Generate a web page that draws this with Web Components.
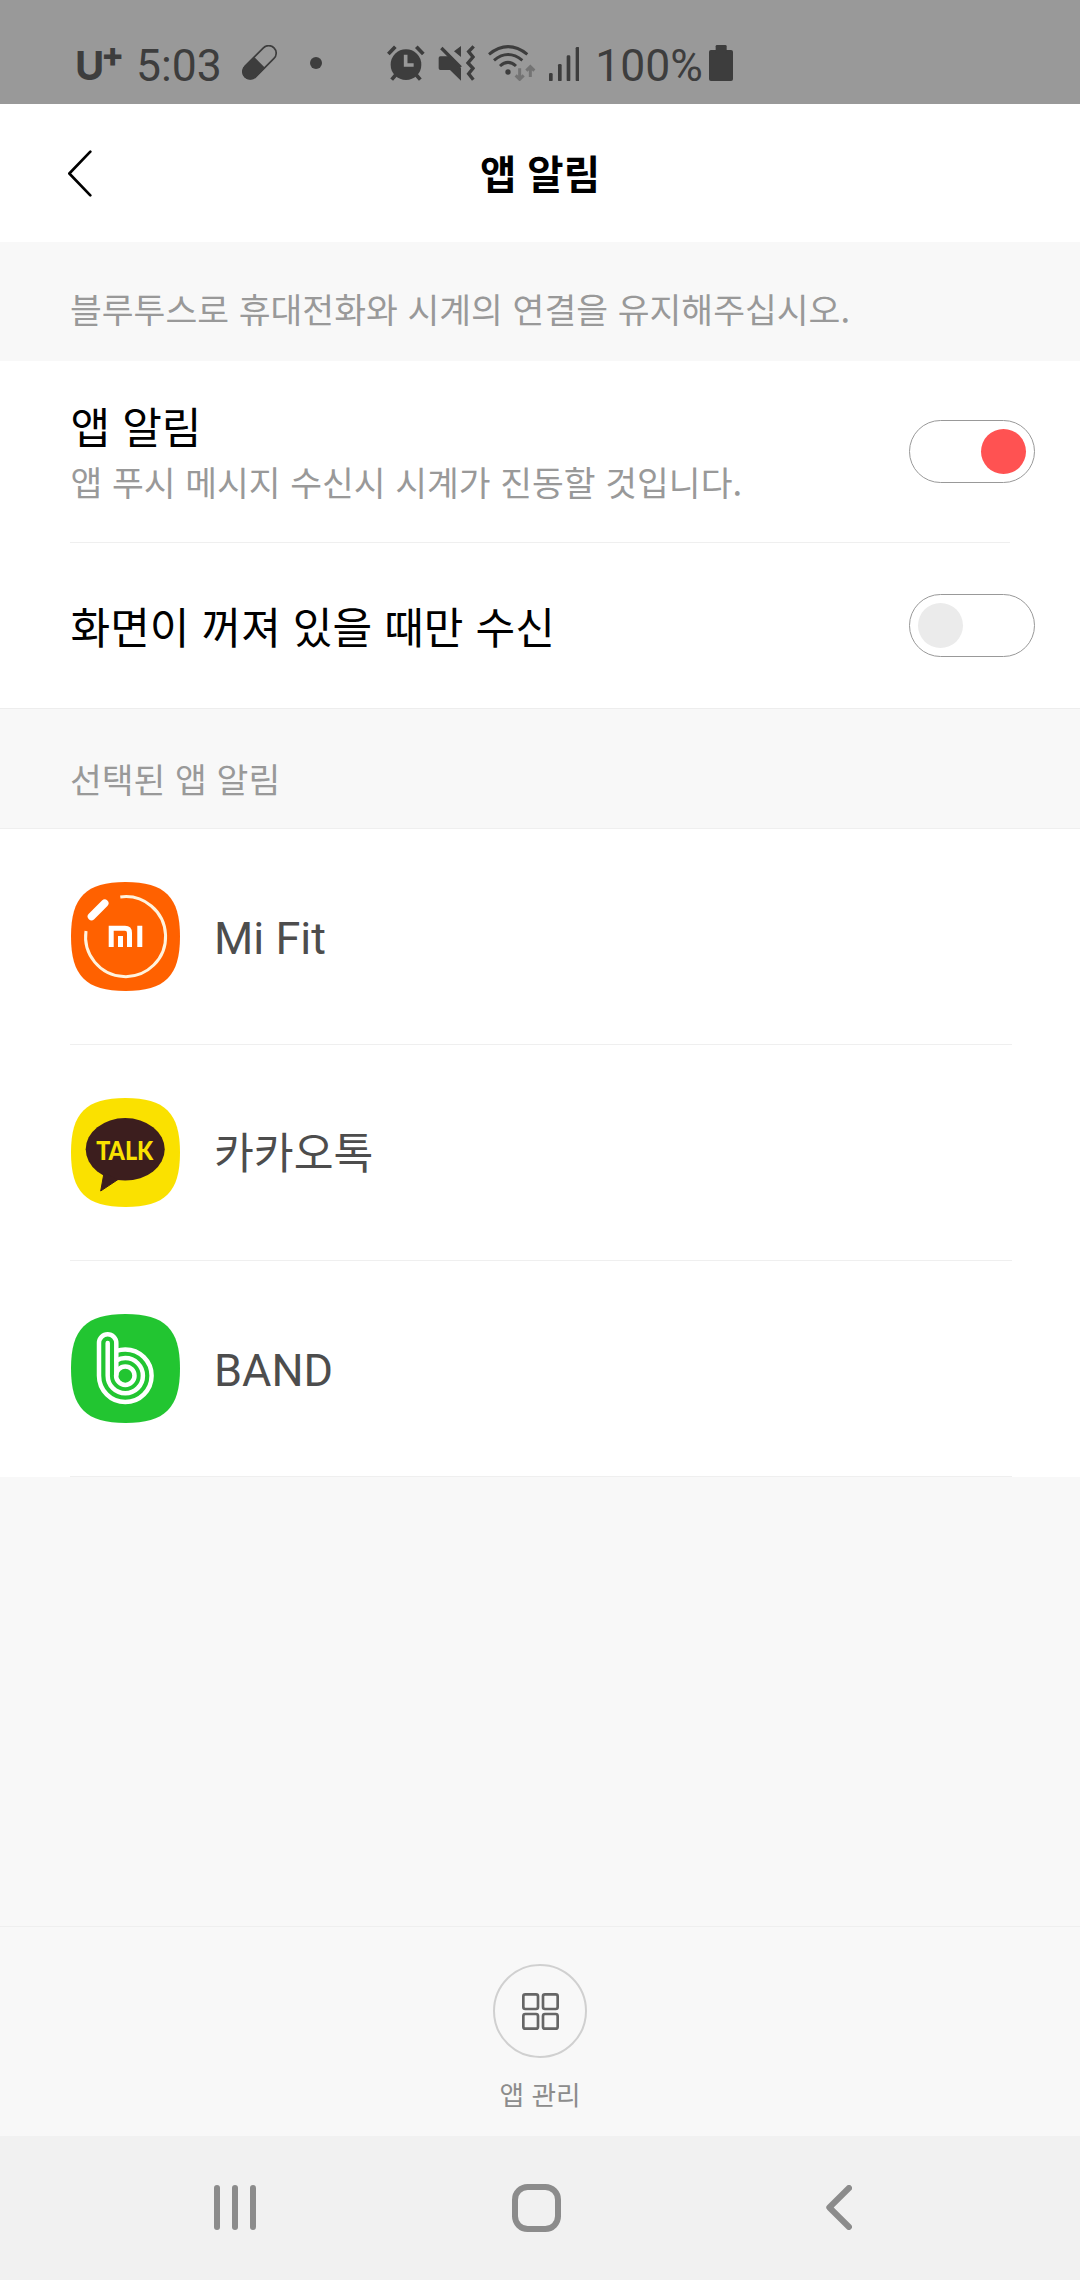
<!DOCTYPE html>
<html lang="ko">
<head>
<meta charset="utf-8">
<title>앱 알림</title>
<style>
  body {
    margin: 0;
    width: 1080px;
    height: 2280px;
    overflow: hidden;
    font-family: "Noto Sans CJK KR", sans-serif;
    background: #f8f8f8;
  }
</style>
</head>
<body>
<app-screen></app-screen>

<script>
// name: [width, height, markup], drawn in thirds of a pixel
const icons = {
  pill: [105, 105, `
    <g transform="translate(52.5 52) rotate(-45)">
      <rect x="-61.5" y="-22.5" width="123" height="45" rx="22.5" fill="none" stroke="currentColor" stroke-width="5"/>
      <path d="M0-24H-39a24 24 0 0 0 0 48H0z"/>
    </g>`],
  dot: [36, 36, `<circle cx="18" cy="18" r="18"/>`],
  alarm: [113, 108, `
    <circle cx="57" cy="59" r="46"/>
    <g fill="none" stroke="currentColor" stroke-width="11">
      <path d="M4 27L25 5M88 5l21 22M26 90L14 104M88 90l12 14"/>
      <path d="M56 29V60H80" stroke="#999"/>
    </g>`],
  mute: [110, 108, `
    <path d="M7 34H34L69 70V107L36 75H7Q2 75 2 70V39Q2 34 7 34zM48 19L69 3V36z"/>
    <path d="M10 9L68 67M107 4L92 20L105 36L90 54L105 70L92 86L106 104" fill="none" stroke="currentColor" stroke-width="10"/>`],
  wifi: [143, 108, `
    <circle cx="60" cy="81" r="8"/>
    <path d="M3 28Q60-18 118 28M18 46Q60 11 103 46M36 63Q60 41 84 63" fill="none" stroke="currentColor" stroke-width="9"/>
    <path d="M95 70V100M83 91l12 12l12-12M127 96V66M115 77l12-12l12 12" fill="none" stroke="#737373" stroke-width="9"/>`],
  signal: [92, 109, `
    <rect y="84" width="11" height="25" rx="4"/>
    <rect x="27" y="57" width="11" height="52" rx="4"/>
    <rect x="53" y="31" width="11" height="78" rx="4"/>
    <rect x="80" y="6" width="11" height="103" rx="4"/>`],
  battery: [72, 108, `
    <rect y="15" width="72" height="93" rx="6"/>
    <rect x="20" width="33" height="24" rx="4"/>`],
  back: [75, 141, `<path d="M70 5L7 70.500L70 136" fill="none" stroke="currentColor" stroke-width="8" stroke-linecap="round" stroke-linejoin="round"/>`],
  apps: [111, 111, `
    <g fill="none" stroke="currentColor" stroke-width="8">
      <rect x="4" y="4" width="44" height="44" rx="6"/>
      <rect x="63" y="4" width="44" height="44" rx="6"/>
      <rect x="4" y="63" width="44" height="44" rx="6"/>
      <rect x="63" y="63" width="44" height="44" rx="6"/>
    </g>`],
  recents: [126, 135, `
    <rect width="18" height="135" rx="9"/>
    <rect x="54" width="18" height="135" rx="9"/>
    <rect x="108" width="18" height="135" rx="9"/>`],
  home: [147, 144, `<rect x="9" y="9" width="129" height="126" rx="38" fill="none" stroke="currentColor" stroke-width="18"/>`],
  navback: [78, 135, `<path d="M69 9L10 67.500L69 126" fill="none" stroke="currentColor" stroke-width="18" stroke-linecap="round" stroke-linejoin="round"/>`]
};

const squircle = "M54.500 0C94 0 109 15 109 54.500S94 109 54.500 109 0 94 0 54.500 15 0 54.500 0";

const logos = {
  mifit: `
    <path d="${squircle}" fill="#ff6100"/>
    <path d="M49.300 15A40 40 0 1 1 15 49" fill="none" stroke="#fff3de" stroke-width="3"/>
    <path d="M20.500 34.500L33.700 21.200" stroke="#fff" stroke-width="7.600" stroke-linecap="round"/>
    <path d="M40.200 65V46.300H54Q58.500 46.300 58.500 51V65" fill="none" stroke="#fff" stroke-width="5"/>
    <path d="M49.500 54V65M68.800 43.800V65" stroke="#fff" stroke-width="5"/>`,
  talk: `
    <path d="${squircle}" fill="#fae100"/>
    <ellipse cx="54.200" cy="51.300" rx="39.500" ry="31.300" fill="#3c1e1e"/>
    <path d="M33 75L29.700 93L47 81.500z" fill="#3c1e1e" stroke="#3c1e1e" stroke-linejoin="round"/>
    <text x="25.200" y="61.700" textLength="57" lengthAdjust="spacingAndGlyphs" font-family="Lato" font-weight="900" font-size="26.500" fill="#fae100">TALK</text>`,
  band: `
    <path d="${squircle}" fill="#22c531"/>
    <g fill="none" stroke="#fff" stroke-width="4.500">
      <path d="M45.300 61.700V29a8.650 8.650 0 0 0-17.300 0V61.700a26.300 26.300 0 1 0 26.300-26.300a26.300 26.300 0 0 0-9 1.600"/>
      <path d="M36.700 29V61.700a17.600 17.600 0 1 0 17.600-17.600a17.600 17.600 0 0 0-9 2.500" stroke-linecap="round"/>
      <circle cx="54.300" cy="61.700" r="9.200"/>
    </g>`
};

class UiIcon extends HTMLElement {
  connectedCallback() {
    const [w, h, markup] = icons[this.getAttribute("name")];
    this.attachShadow({ mode: "open" }).innerHTML = `
      <style>
        :host { display: block; flex: none; }
        svg { display: block; }
      </style>
      <svg width="${w / 3}" height="${h / 3}" viewBox="0 0 ${w} ${h}" fill="currentColor">${markup}</svg>
    `;
  }
}
customElements.define("ui-icon", UiIcon);

class AppLogo extends HTMLElement {
  connectedCallback() {
    this.attachShadow({ mode: "open" }).innerHTML = `
      <style>
        :host { display: block; flex: none; width: 109px; height: 109px; }
        svg { display: block; }
      </style>
      <svg width="109" height="109" viewBox="0 0 109 109">${logos[this.getAttribute("name")]}</svg>
    `;
  }
}
customElements.define("app-logo", AppLogo);

// Elements that only need a static template
function define(name, html) {
  const template = document.createElement("template");
  template.innerHTML = html;

  customElements.define(name, class extends HTMLElement {
    constructor() {
      super();
      this.attachShadow({ mode: "open" });
      this.shadowRoot.appendChild(template.content.cloneNode(true));
    }
  });
}

define("status-bar", `
  <style>
    :host {
      display: flex;
      align-items: flex-start;
      box-sizing: border-box;
      height: 104px;
      padding: 45px 0 0 75px;
      background: #999;
      color: #3d3d3d;
      font: 44.500px/44px Roboto, sans-serif;
      white-space: nowrap;
    }
    .carrier { display: flex; width: 61px; }
    .carrier b { font: 700 40px/44px Inter, sans-serif; width: 27px; margin-top: -1px; }
    .carrier i { font: 800 34px/24px Inter, sans-serif; margin: -2px 0 0 -1px; }
    .time { width: 85px; margin-top: -1px; }
    .percent { width: 107px; margin: -1px 0 0 16px; }
    .pill { margin-left: 21px; }
    .dot { margin: 12px 0 0 33px; }
    .alarm { margin-left: 65px; }
    .mute { margin-left: 13.600px; }
    .wifi { margin-left: 13.300px; }
    .signal { margin-left: 12.700px; }
    .battery { margin-left: 7px; }
  </style>
  <span class="carrier"><b>U</b><i>+</i></span>
  <span class="time">5:03</span>
  <ui-icon class="pill" name="pill"></ui-icon>
  <ui-icon class="dot" name="dot"></ui-icon>
  <ui-icon class="alarm" name="alarm"></ui-icon>
  <ui-icon class="mute" name="mute"></ui-icon>
  <ui-icon class="wifi" name="wifi"></ui-icon>
  <ui-icon class="signal" name="signal"></ui-icon>
  <span class="percent">100%</span>
  <ui-icon class="battery" name="battery"></ui-icon>
`);

define("title-bar", `
  <style>
    :host {
      display: grid;
      grid-template-columns: 1fr auto 1fr;
      align-items: center;
      box-sizing: border-box;
      height: 138px;
      padding: 0 67px;
      background: #fff;
      color: #000;
    }
    h1 { margin: 0; font-size: 39.500px; font-weight: 700; line-height: 58px; padding-bottom: 2px; }
  </style>
  <ui-icon name="back"></ui-icon>
  <h1><slot></slot></h1>
`);

define("section-note", `
  <style>
    :host {
      display: block;
      box-sizing: border-box;
      height: 119px;
      padding: 40px 70px 0;
      color: #999;
      font-size: 34.600px;
      line-height: 52px;
      white-space: nowrap;
    }
  </style>
  <slot></slot>
`);

define("toggle-switch", `
  <style>
    :host {
      display: flex;
      align-items: center;
      flex: none;
      box-sizing: border-box;
      width: 126px;
      height: 63px;
      padding: 0 8px;
      border: 1px solid #999;
      border-radius: 32px;
      background: #fff;
    }
    span { width: 45px; height: 45px; border-radius: 50%; background: #ebebeb; }
    :host([on]) { justify-content: flex-end; }
    :host([on]) span { background: #ff5252; }
  </style>
  <span></span>
`);

define("setting-row", `
  <style>
    :host {
      display: flex;
      align-items: center;
      justify-content: space-between;
      box-sizing: border-box;
      padding: 0 45px 0 70.500px;
      white-space: nowrap;
    }
    .label { color: #000; font-size: 43.100px; line-height: 60px; margin-top: -2px; }
    ::slotted([slot=detail]) { display: block; color: #999; font-size: 34.550px; line-height: 50px; margin-top: 1px; }
  </style>
  <div>
    <div class="label"><slot></slot></div>
    <slot name="detail"></slot>
  </div>
  <slot name="control"></slot>
`);

define("app-row", `
  <style>
    :host {
      display: flex;
      align-items: center;
      gap: 34px;
      box-sizing: border-box;
      height: 216px;
      margin: 0 68px 0 70px;
      padding-left: 1px;
      border-bottom: 1px solid #efefef;
      color: #4d4d4d;
      font: 45px/60px Roboto, "Noto Sans CJK KR", sans-serif;
      white-space: nowrap;
    }
    :host([lang=ko]) { font-size: 43.300px; }
    span { padding-top: 4px; }
  </style>
  <slot name="logo"></slot>
  <span><slot></slot></span>
`);

define("manage-button", `
  <style>
    :host {
      display: flex;
      flex-direction: column;
      align-items: center;
      box-sizing: border-box;
      height: 210px;
      padding-top: 37px;
      border-top: 1px solid #efefef;
      color: #666;
    }
    .ring {
      display: flex;
      align-items: center;
      justify-content: center;
      box-sizing: border-box;
      width: 94px;
      height: 94px;
      border: 2px solid #d0d0d0;
      border-radius: 50%;
    }
    .label { margin-top: 16px; color: #8c8c8c; font-size: 26.700px; line-height: 40px; }
  </style>
  <div class="ring"><ui-icon name="apps"></ui-icon></div>
  <div class="label"><slot></slot></div>
`);

define("nav-bar", `
  <style>
    :host {
      display: flex;
      align-items: center;
      box-sizing: border-box;
      height: 144px;
      padding: 0 0 1px 214px;
      background: #f1f1f1;
      color: #8c8c8c;
    }
    [name=home] { margin: 0 265px 0 256px; }
  </style>
  <ui-icon name="recents"></ui-icon>
  <ui-icon name="home"></ui-icon>
  <ui-icon name="navback"></ui-icon>
`);

define("app-screen", `
  <style>
    :host { display: flex; flex-direction: column; height: 2280px; }
    .settings, .apps { background: #fff; }
    .settings { border-bottom: 1px solid #ededed; }
    .push { height: 181px; }
    .push toggle-switch { margin-bottom: 1px; }
    .screen-off { height: 165px; }
    hr { height: 1px; margin: 0 70px; border: 0; background: #efefef; }
    .apps { border-top: 1px solid #efefef; }
    .selected { height: 119px; padding-top: 43px; }
    manage-button { margin-top: auto; }
  </style>
  <status-bar></status-bar>
  <title-bar>앱 알림</title-bar>
  <section-note>블루투스로 휴대전화와 시계의 연결을 유지해주십시오.</section-note>
  <div class="settings">
    <setting-row class="push">
      앱 알림
      <span slot="detail">앱 푸시 메시지 수신시 시계가 진동할 것입니다.</span>
      <toggle-switch slot="control" on></toggle-switch>
    </setting-row>
    <hr>
    <setting-row class="screen-off">
      화면이 꺼져 있을 때만 수신
      <toggle-switch slot="control"></toggle-switch>
    </setting-row>
  </div>
  <section-note class="selected">선택된 앱 알림</section-note>
  <div class="apps">
    <app-row><app-logo slot="logo" name="mifit"></app-logo>Mi Fit</app-row>
    <app-row lang="ko"><app-logo slot="logo" name="talk"></app-logo>카카오톡</app-row>
    <app-row><app-logo slot="logo" name="band"></app-logo>BAND</app-row>
  </div>
  <manage-button>앱 관리</manage-button>
  <nav-bar></nav-bar>
`);
</script>
</body>
</html>
